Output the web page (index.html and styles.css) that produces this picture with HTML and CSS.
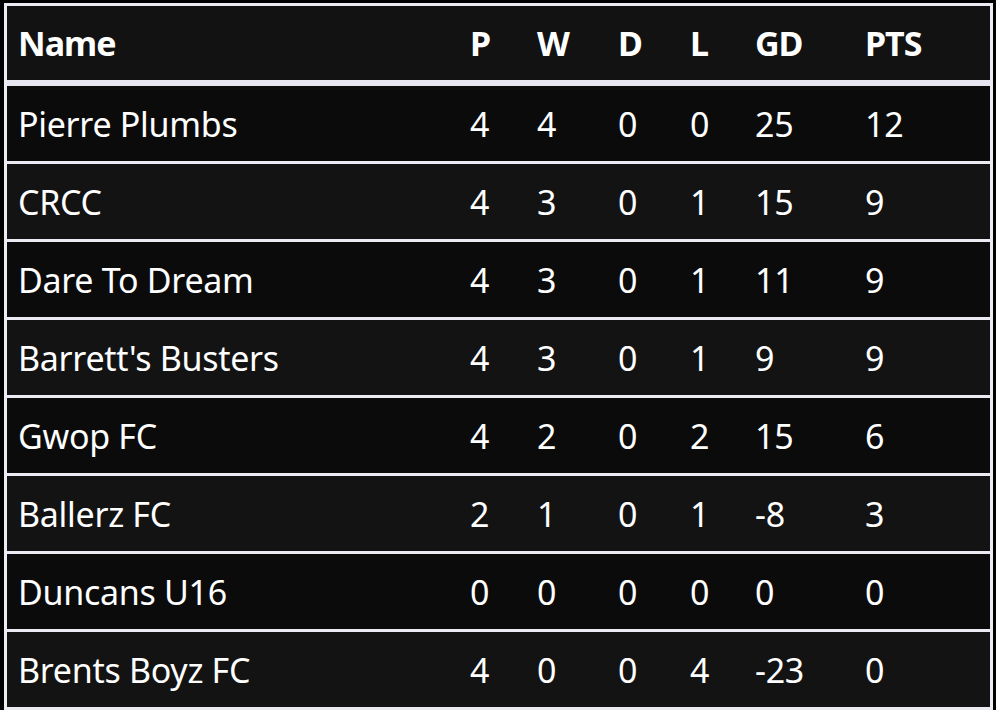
FILE: index.html
```html
<!DOCTYPE html>
<html lang="en">
<head>
    <meta charset="UTF-8">
    <meta name="viewport" content="width=device-width, initial-scale=1.0">
    <title>League Table</title>
    <link rel="stylesheet" href="styles.css">
</head>
<body>
    <table class="league">
        <colgroup>
            <col class="col-name">
            <col class="col-p">
            <col class="col-w">
            <col class="col-d">
            <col class="col-l">
            <col class="col-gd">
            <col class="col-pts">
        </colgroup>
        <thead>
            <tr>
                <th>Name</th>
                <th>P</th>
                <th>W</th>
                <th>D</th>
                <th>L</th>
                <th>GD</th>
                <th>PTS</th>
            </tr>
        </thead>
        <tbody>
            <tr><td>Pierre Plumbs</td><td>4</td><td>4</td><td>0</td><td>0</td><td>25</td><td>12</td></tr>
            <tr><td>CRCC</td><td>4</td><td>3</td><td>0</td><td>1</td><td>15</td><td>9</td></tr>
            <tr><td>Dare To Dream</td><td>4</td><td>3</td><td>0</td><td>1</td><td>11</td><td>9</td></tr>
            <tr><td>Barrett's Busters</td><td>4</td><td>3</td><td>0</td><td>1</td><td>9</td><td>9</td></tr>
            <tr><td>Gwop FC</td><td>4</td><td>2</td><td>0</td><td>2</td><td>15</td><td>6</td></tr>
            <tr><td>Ballerz FC</td><td>2</td><td>1</td><td>0</td><td>1</td><td>-8</td><td>3</td></tr>
            <tr><td>Duncans U16</td><td>0</td><td>0</td><td>0</td><td>0</td><td>0</td><td>0</td></tr>
            <tr><td>Brents Boyz FC</td><td>4</td><td>0</td><td>0</td><td>4</td><td>-23</td><td>0</td></tr>
        </tbody>
    </table>
</body>
</html>
```

FILE: styles.css
```css
body {
    margin: 0;
    padding: 3px 0 0 4px;
    background: #000;
    font-family: "Noto Sans", "Open Sans", sans-serif;
    color: #fff;
    overflow: hidden;
}
.league {
    width: 989px;
    table-layout: fixed;
    border-collapse: separate;
    border-spacing: 0;
    border: 3px solid #ecebf3;
    border-bottom: none;
    font-size: 34px;
}
.col-name { width: 452px; }
.col-p { width: 67px; }
.col-w { width: 81px; }
.col-d { width: 72px; }
.col-l { width: 65px; }
.col-gd { width: 110px; }
.col-pts { width: 136px; }
th, td {
    padding: 0 0 0 11px;
    text-align: left;
    white-space: nowrap;
}
th {
    height: 74px;
    background: #121212;
    font-weight: bold;
    letter-spacing: -1px;
    border-bottom: 6px solid #e6e5f0;
}
td {
    height: 75px;
    letter-spacing: -0.3px;
    border-bottom: 3px solid #ecebf3;
}
tbody tr:nth-child(odd) td {
    background: #0b0b0b;
}
tbody tr:nth-child(even) td {
    background: #131313;
}
```
